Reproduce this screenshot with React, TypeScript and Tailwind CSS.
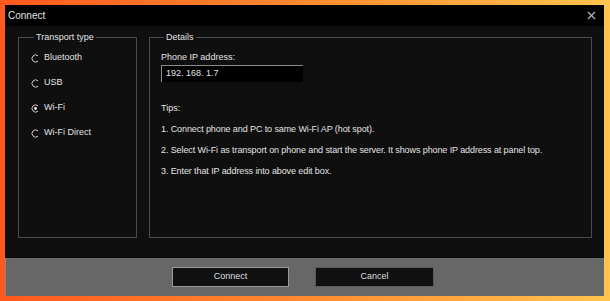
import { X } from "lucide-react";

const TRANSPORTS = ["Bluetooth", "USB", "Wi-Fi", "Wi-Fi Direct"];

const TIPS = [
  "1. Connect phone and PC to same Wi-Fi AP (hot spot).",
  "2. Select Wi-Fi as transport on phone and start the server. It shows phone IP address at panel top.",
  "3. Enter that IP address into above edit box.",
];

function Radio({ checked }: { checked: boolean }) {
  return (
    <svg width="9" height="9" viewBox="0 0 9 9" className="shrink-0">
      <path d="M7 1.8 A3.6 3.6 0 1 0 7 7.2" fill="none" stroke="#d0d0d0" strokeWidth="1" />
      {checked && <circle cx="4.5" cy="4.5" r="1.4" fill="#f0f0f0" />}
    </svg>
  );
}

export default function App() {
  return (
    <div
      className="w-[610px] h-[301px] bg-gradient-to-r from-[#ff581e] via-[#ff8a30] to-[#ffc44e] pt-[5px] pl-[5px] pr-[6px] pb-[5px] text-[#e2e2e2]"
      style={{ fontFamily: '"Liberation Sans", Arial, sans-serif' }}
    >
      <div className="flex flex-col h-full">
        <div className="h-[21px] bg-black flex items-center justify-between pl-[3px] pr-[6px]">
          <span className="text-[10px]">Connect</span>
          <X size={13} strokeWidth={2} className="text-[#bbb]" />
        </div>

        <div className="flex-1 bg-[#0f0f0f] flex gap-[12px] pl-[13px] pr-[12px] pt-[5px] pb-[20px]">
          <fieldset className="w-[119px] border border-[#4a4a4a] pl-[12px]">
            <legend className="ml-[3px] px-[2px] text-[9px] leading-[12px]">Transport type</legend>
            <div className="flex flex-col gap-[13px] pt-[9px]">
              {TRANSPORTS.map((t) => (
                <div key={t} className="flex items-center gap-[4px] h-[12px]">
                  <Radio checked={t === "Wi-Fi"} />
                  <span className="text-[9px]">{t}</span>
                </div>
              ))}
            </div>
          </fieldset>

          <fieldset className="flex-1 border border-[#4a4a4a] pl-[11px]">
            <legend className="ml-[3px] px-[2px] text-[9px] leading-[12px]">Details</legend>
            <div className="text-[9px] leading-[12px] pt-[8px]">Phone IP address:</div>
            <div className="mt-[2px] w-[142px] h-[17px] bg-black border-t border-l border-[#8a8a8a] border-r-[#333] border-b-[#333] flex items-center pl-[4px] text-[9px]">
              192. 168. 1.7
            </div>
            <div className="text-[9px] leading-[12px] mt-[20px]">Tips:</div>
            <div className="flex flex-col gap-[9px] mt-[9px]">
              {TIPS.map((tip) => (
                <div key={tip} className="text-[9px] leading-[12px] tracking-[-0.1px]">
                  {tip}
                </div>
              ))}
            </div>
          </fieldset>
        </div>

        <div className="h-[38px] bg-[#676767] border-l border-[#8a8a8a] flex justify-center items-start pt-[9px] gap-[26px] pr-[4px]">
          <button className="w-[117px] h-[20px] bg-[#111] border border-[#9a9a9a] text-[9px] text-[#ddd]">
            Connect
          </button>
          <button className="w-[119px] h-[20px] bg-[#111] border border-[#5a5a5a] text-[9px] text-[#ddd]">
            Cancel
          </button>
        </div>
      </div>
    </div>
  );
}
